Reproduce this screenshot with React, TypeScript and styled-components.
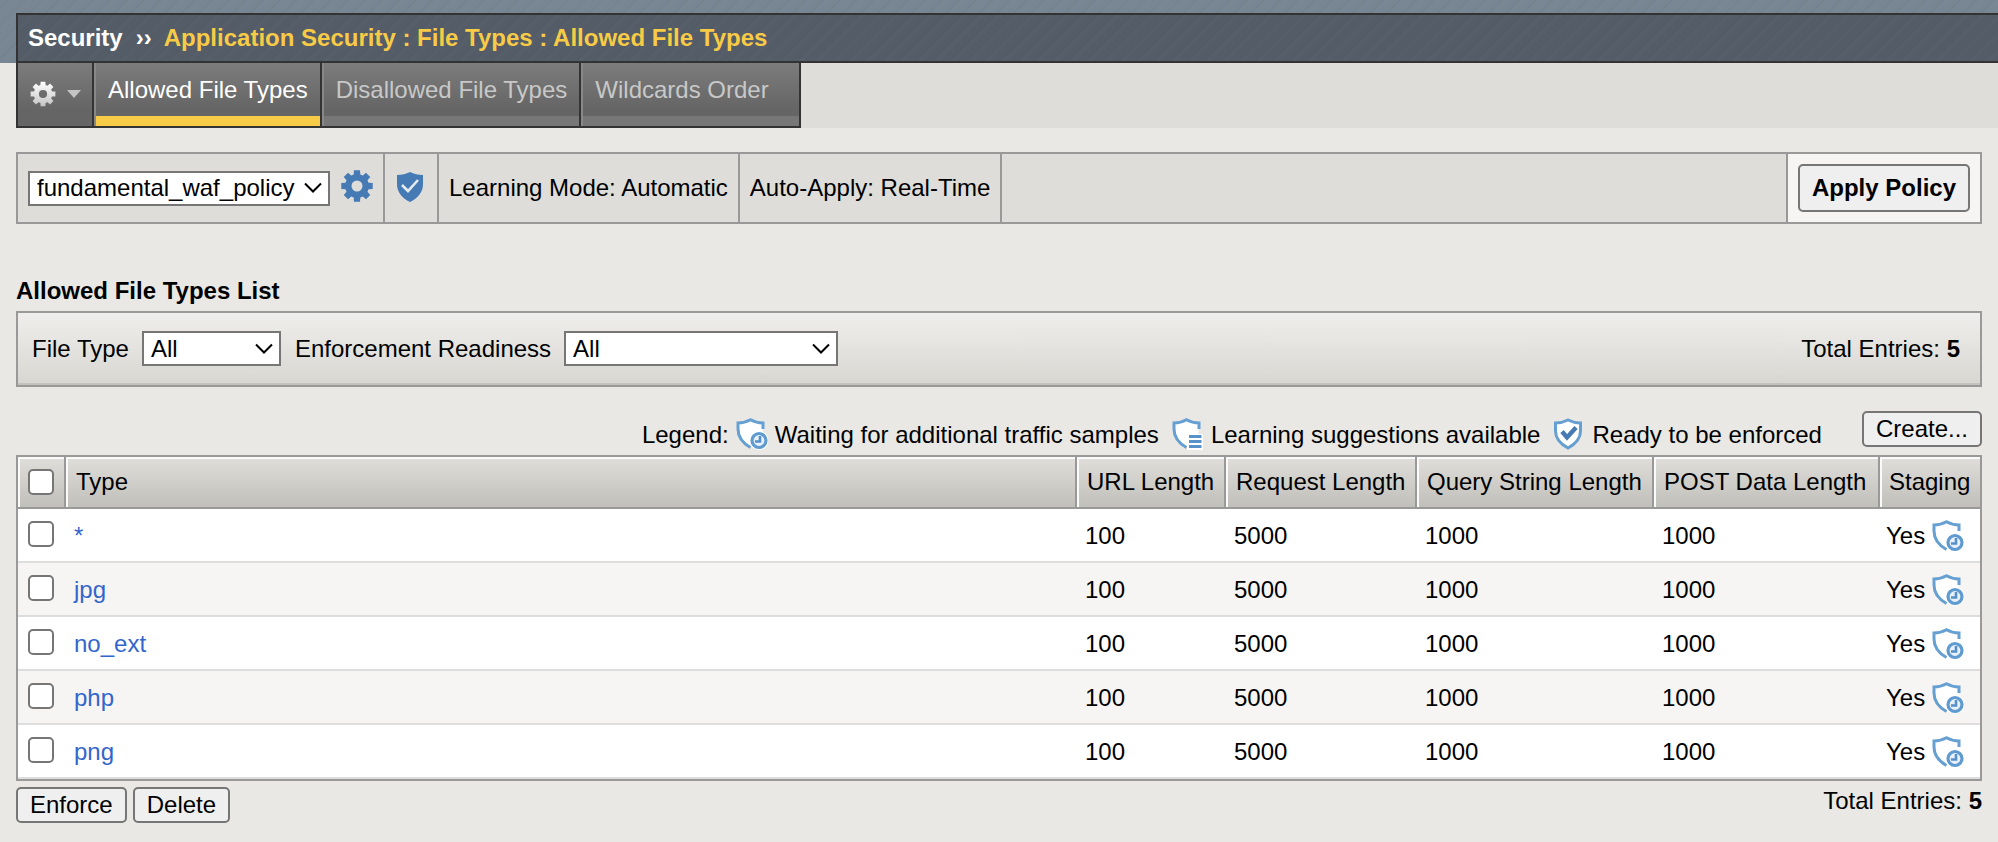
import React from 'react';
import styled, { createGlobalStyle, css } from 'styled-components';

const Global = createGlobalStyle`
  *, *::before, *::after { box-sizing: border-box; }
  body {
    margin: 0;
    background: #e9e8e4;
    color: #000;
    font: 24px/28px "Liberation Sans", Arial, sans-serif;
  }
  button, select, input { font: inherit; color: inherit; margin: 0; }
  svg { display: block; flex: none; }
`;

const line = '#999';

const Header = styled.header`
  padding: 13px 0 0 16px;
  background: repeating-linear-gradient(135deg, #788593 0 5px, #75838f 5px 7px, #798795 7px 12px) top / 100% 63px no-repeat;
`;

const TitleBar = styled.h1`
  display: flex;
  align-items: center;
  height: 50px;
  margin: 0;
  padding: 0 10px;
  border: solid #333;
  border-width: 2px 0 2px 2px;
  background: repeating-linear-gradient(135deg, #545c67 0 6px, #535b66 6px 8px, #555e69 8px 12px);
  color: #fff;
  font-size: 24px;
  font-weight: bold;
  white-space: pre;
`;

const Crumb = styled.span`
  color: #f8cb46;
`;

const Chevrons = styled.span`
  padding: 0 12px 0 13px;
`;

const TabStrip = styled.nav`
  display: flex;
  height: 65px;
  background: #deddd9;
`;

const tabFace = css`
  height: 65px;
  border: 0 solid #333;
  border-right-width: 2px;
  border-bottom-width: 2px;
  background: linear-gradient(#7c7c7c, #656565 75%);
`;

const MenuButton = styled.button`
  ${tabFace}
  display: flex;
  align-items: center;
  gap: 11px;
  width: 78px;
  padding: 0 10px 2px 12px;
  border-left-width: 2px;
`;

const Tab = styled.a<{ $active?: boolean; $last?: boolean }>`
  ${tabFace}
  padding: 13px ${p => (p.$last ? '30px' : '12px')} 0 14px;
  color: ${p => (p.$active ? '#fff' : '#c8c8c8')};
  text-decoration: none;
  white-space: nowrap;
  box-shadow: inset 2px 0 #888, inset 0 -10px ${p => (p.$active ? '#f8cb46' : '#777')};
`;

const Main = styled.main`
  padding: 24px 16px 18px;
`;

const PolicyBar = styled.section`
  display: flex;
  height: 72px;
  border: 2px solid ${line};
  background: #deddd9;
`;

const PolicyCell = styled.div`
  display: flex;
  align-items: center;
  gap: 11px;
  padding: 0 10px;
  border-right: 2px solid ${line};
  white-space: nowrap;
`;

const IconCell = styled(PolicyCell)`
  width: 54px;
  justify-content: center;
  padding: 0 2px 2px 0;
`;

const ApplyCell = styled.div`
  display: flex;
  align-items: center;
  margin-left: auto;
  padding: 0 10px;
  border-left: 2px solid ${line};
  background: #f6f5f4;
`;

const Button = styled.button<{ $primary?: boolean }>`
  height: ${p => (p.$primary ? '48px' : '36px')};
  padding: 0 12px;
  border: 2px solid #767676;
  border-radius: 5px;
  background: #efefef;
  line-height: 28px;
  font-weight: ${p => (p.$primary ? 'bold' : 'normal')};
  white-space: nowrap;
`;

const SelectBox = styled.span<{ $width: number }>`
  display: grid;
  width: ${p => p.$width}px;
  align-items: center;
  > * { grid-area: 1 / 1; }
  svg { justify-self: end; margin-right: 8px; pointer-events: none; }
`;

const NativeSelect = styled.select`
  appearance: none;
  width: 100%;
  height: 35px;
  padding: 0 7px;
  border: 2px solid #767676;
  border-radius: 0;
  background: #fff;
`;

const ListHeading = styled.h2`
  margin: 53px 0 6px;
  font-size: 24px;
  line-height: 28px;
`;

const FilterBar = styled.section`
  display: flex;
  align-items: center;
  height: 76px;
  padding: 0 20px 1px 14px;
  border: 2px solid ${line};
  background: linear-gradient(#efeeec, #e7e6e3 35%, #d8d6d1);
  box-shadow: inset 0 -2px #c3c2be;
`;

const Field = styled.label`
  display: flex;
  align-items: center;
  gap: 13px;
  margin-right: 14px;
`;

const Total = styled.span`
  margin-left: auto;
`;

const LegendRow = styled.div`
  display: flex;
  align-items: center;
  justify-content: flex-end;
  height: 44px;
  margin-top: 24px;
  padding-bottom: 8px;
  white-space: nowrap;
`;

const Legend = styled.div`
  display: flex;
  align-items: center;
  padding-top: 12px;
  margin-right: 40px;
`;

const LegendItem = styled.span`
  display: flex;
  align-items: center;
  gap: 7px;
  margin-left: 7px;
  & + & { margin-left: 13px; }
  svg { margin-bottom: 2px; }
`;

const Grid = styled.table`
  width: 100%;
  border-collapse: separate;
  border-spacing: 0;
  table-layout: fixed;
  border: 2px solid ${line};
`;

const Th = styled.th`
  height: 52px;
  padding: 0 0 0 10px;
  border-bottom: 2px solid ${line};
  background: linear-gradient(#dfdeda, #c1bfba);
  box-shadow: inset 2px 2px #fafafa;
  font-weight: normal;
  text-align: left;
  white-space: nowrap;
  & + & { border-left: 2px solid ${line}; }
  & + &:last-child { padding-left: 9px; }
`;

const Td = styled.td`
  height: 54px;
  padding: 2px 0 0 10px;
  border-bottom: 2px solid #ddd;
  &:first-child { padding-top: 0; padding-bottom: 2px; }
  &:last-child { padding-left: 8px; }
`;

const Row = styled.tr`
  background: #fff;
  &:nth-child(even) { background: #f6f5f4; }
`;

const TypeLink = styled.a`
  color: #3366cc;
  text-decoration: none;
`;

const Staging = styled.span`
  display: flex;
  align-items: center;
  gap: 7px;
`;

const Check = styled.input`
  appearance: none;
  display: block;
  width: 26px;
  height: 26px;
  border: 2px solid #767676;
  border-radius: 5px;
  background: #fff;
  &:checked { background: #3366cc; }
`;

const Footer = styled.footer`
  display: flex;
  align-items: flex-start;
  gap: 6px;
  margin-top: 6px;
`;

const gearPath = (n: number, r1: number, r2: number, hole: number) => {
  const pts: string[] = [];
  for (let i = 0; i < n; i++) {
    const a = (i * 2 * Math.PI) / n - Math.PI / 2;
    const at = (r: number, d: number) =>
      `${(16 + r * Math.cos(a + d)).toFixed(2)} ${(16 + r * Math.sin(a + d)).toFixed(2)}`;
    pts.push(`${i ? 'L' : 'M'}${at(r1, -0.28)} L${at(r2, -0.19)} L${at(r2, 0.19)} L${at(r1, 0.28)}`);
  }
  return `${pts.join(' ')} Z M${16 - hole} 16 a${hole} ${hole} 0 1 0 ${hole * 2} 0 a${hole} ${hole} 0 1 0 ${-hole * 2} 0 Z`;
};

const MenuGear = () => (
  <svg width="26" height="26" viewBox="0 0 32 32" aria-hidden="true">
    <defs>
      <linearGradient id="silver" x1="0" y1="0" x2="0" y2="1">
        <stop offset="0" stopColor="#fff" />
        <stop offset="1" stopColor="#c4c4c4" />
      </linearGradient>
    </defs>
    <path fill="url(#silver)" fillRule="evenodd" d={gearPath(8, 11.5, 15.5, 5)} />
  </svg>
);

const Caret = () => (
  <svg width="14" height="8" viewBox="0 0 14 8" aria-hidden="true">
    <path d="M0 0h14L7 8z" fill="#c4c4c4" />
  </svg>
);

const BlueGear = () => (
  <svg width="32" height="36" viewBox="0 0 32 36" aria-hidden="true">
    <path fill="#457ab5" fillRule="evenodd" d={gearPath(8, 12, 16, 5.5)} />
  </svg>
);

const PolicyShield = () => (
  <svg width="28" height="32" viewBox="0 0 28 32" aria-hidden="true">
    <path d="M14 1c4 2 8 3 13 3v9c0 8-5 14-13 18C6 27 1 21 1 13V4c5 0 9-1 13-3z" fill="#457ab5" />
    <path d="M6 14l6 6 10-11" fill="none" stroke="#e4eaf0" strokeWidth="2.6" />
  </svg>
);

type Status = 'waiting' | 'learning' | 'ready';

const StatusShield = ({ kind }: { kind: Status }) => (
  <svg width="32" height="32" viewBox="0 0 32 32" aria-hidden="true">
    {kind === 'ready' ? (
      <>
        <path d="M15 2c4 2 8 3 12.500 3v8c0 7-5 13-12.500 17C7.500 26 2.500 20 2.500 13V5c4.500 0 8.500-1 12.500-3z" fill="#fff" stroke="#669fd1" strokeWidth="3" />
        <path d="M9 13.500l5 6 9-10" fill="none" stroke="#457ab5" strokeWidth="4.400" />
      </>
    ) : (
      <>
        <path d="M14.500 2c4 2 8 3 12 3v10l-10 14h-2C7 25 2 20 2 13V5c4.500 0 8.500-1 12.500-3z" fill="#fff" />
        <path d="M27 11V5c-4.500 0-8.500-1-12.500-3.200C10.500 4 6.500 5 2 5v6c0 8 4.500 14 12.500 18.500" fill="none" stroke="#669fd1" strokeWidth="3" />
      </>
    )}
    {kind === 'waiting' && (
      <>
        <circle cx="23" cy="22.500" r="9.500" fill="#fff" />
        <circle cx="23" cy="22.500" r="7" fill="#e8f1f9" stroke="#5f9bd0" strokeWidth="3.200" />
        <path d="M24 18v5.500h-5" fill="none" stroke="#5590c9" strokeWidth="2.600" />
      </>
    )}
    {kind === 'learning' && (
      <>
        <path d="M15 16h16v16H15z" fill="#fff" />
        <path d="M17 18.500h12.500M17 23.500h12.500M17 28.500h12.500" stroke="#5792cb" strokeWidth="3" />
      </>
    )}
  </svg>
);

const SelectField = ({ id, width, value, label }: { id: string; width: number; value: string; label?: string }) => (
  <SelectBox $width={width}>
    <NativeSelect id={id} aria-label={label}>
      <option>{value}</option>
    </NativeSelect>
    <svg width="18" height="12" viewBox="0 0 18 12" aria-hidden="true">
      <path d="M1 1.5l8 8 8-8" fill="none" stroke="#000" strokeWidth="2" />
    </svg>
  </SelectBox>
);

const columns = ['URL Length', 'Request Length', 'Query String Length', 'POST Data Length', 'Staging'];
const widths = [149, 191, 237, 226, 102];
const types = ['*', 'jpg', 'no_ext', 'php', 'png'];
const limits = [100, 5000, 1000, 1000];

export default function App() {
  return (
    <>
      <Global />
      <Header>
        <TitleBar>
          Security<Chevrons>››</Chevrons>
          <Crumb>Application Security : File Types : Allowed File Types</Crumb>
        </TitleBar>
        <TabStrip>
          <MenuButton aria-label="Options">
            <MenuGear />
            <Caret />
          </MenuButton>
          <Tab href="#allowed" $active>Allowed File Types</Tab>
          <Tab href="#disallowed">Disallowed File Types</Tab>
          <Tab href="#wildcards" $last>Wildcards Order</Tab>
        </TabStrip>
      </Header>
      <Main>
        <PolicyBar>
          <PolicyCell>
            <SelectField id="policy" width={302} value="fundamental_waf_policy" label="Policy" />
            <BlueGear />
          </PolicyCell>
          <IconCell><PolicyShield /></IconCell>
          <PolicyCell>Learning Mode: Automatic</PolicyCell>
          <PolicyCell>Auto-Apply: Real-Time</PolicyCell>
          <ApplyCell><Button $primary>Apply Policy</Button></ApplyCell>
        </PolicyBar>

        <ListHeading>Allowed File Types List</ListHeading>
        <FilterBar>
          <Field htmlFor="file-type">
            File Type
            <SelectField id="file-type" width={139} value="All" />
          </Field>
          <Field htmlFor="readiness">
            Enforcement Readiness
            <SelectField id="readiness" width={274} value="All" />
          </Field>
          <Total>Total Entries: <b>5</b></Total>
        </FilterBar>

        <LegendRow>
          <Legend>
            Legend:
            <LegendItem><StatusShield kind="waiting" />Waiting for additional traffic samples</LegendItem>
            <LegendItem><StatusShield kind="learning" />Learning suggestions available</LegendItem>
            <LegendItem><StatusShield kind="ready" />Ready to be enforced</LegendItem>
          </Legend>
          <Button>Create...</Button>
        </LegendRow>

        <Grid>
          <colgroup>
            <col width={46} />
            <col />
            {widths.map((w, i) => <col key={i} width={w} />)}
          </colgroup>
          <thead>
            <tr>
              <Th><Check type="checkbox" aria-label="Select all" /></Th>
              <Th>Type</Th>
              {columns.map(c => <Th key={c}>{c}</Th>)}
            </tr>
          </thead>
          <tbody>
            {types.map(t => (
              <Row key={t}>
                <Td><Check type="checkbox" aria-label={`Select ${t}`} /></Td>
                <Td><TypeLink href={`#${t}`}>{t}</TypeLink></Td>
                {limits.map((n, i) => <Td key={i}>{n}</Td>)}
                <Td><Staging>Yes <StatusShield kind="waiting" /></Staging></Td>
              </Row>
            ))}
          </tbody>
        </Grid>

        <Footer>
          <Button>Enforce</Button>
          <Button>Delete</Button>
          <Total>Total Entries: <b>5</b></Total>
        </Footer>
      </Main>
    </>
  );
}
